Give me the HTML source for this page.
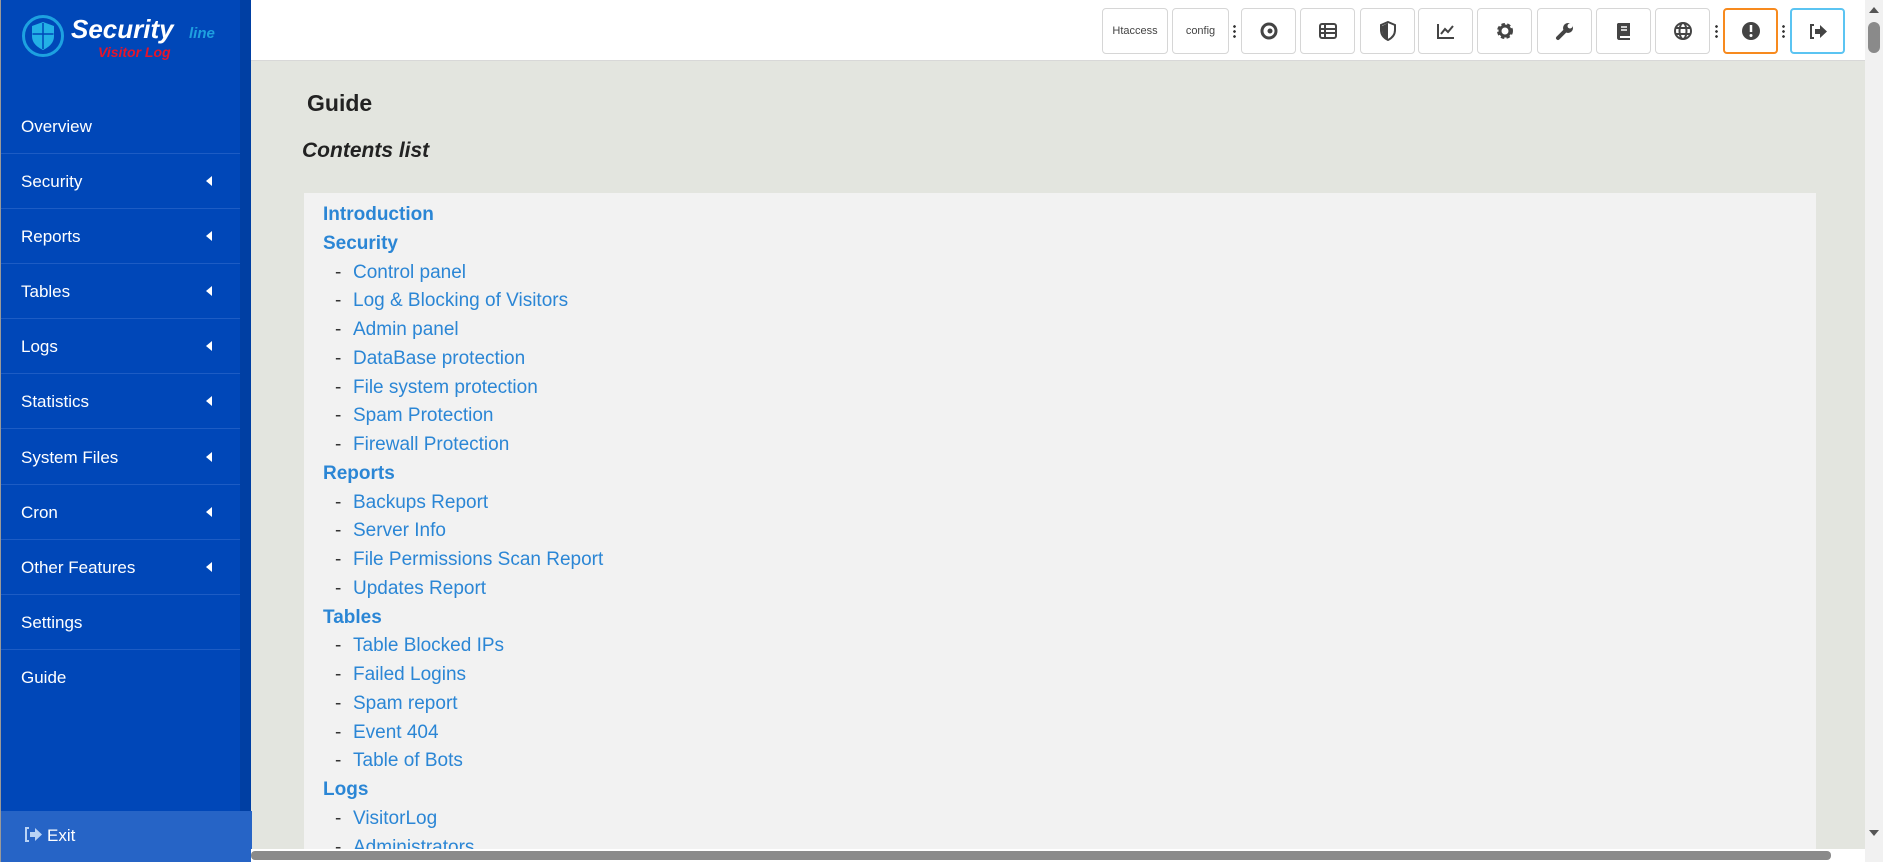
<!DOCTYPE html>
<html><head><meta charset="utf-8">
<style>
*{margin:0;padding:0;box-sizing:border-box}
html,body{width:1883px;height:862px;overflow:hidden;background:#e3e5df;font-family:"Liberation Sans",sans-serif}
.sb{position:absolute;left:0;top:0;width:251px;height:862px;background:#003fa3;border-left:1px solid #999}
.sbin{position:absolute;left:0;top:0;width:239px;height:862px;background:#0047b8}
.item{position:absolute;left:0;width:239px;height:55px;color:#fff;font-size:17px;line-height:55px;padding-left:20px;border-bottom:1px solid #1d5cc4}
.item .ar{position:absolute;left:205px;top:22px;width:0;height:0;border-top:5px solid transparent;border-bottom:5px solid transparent;border-right:6px solid #fff}
.exit{position:absolute;left:0;top:811px;width:251px;height:51px;background:#2664c6;color:#fff;font-size:17px;padding:15px 0 0 22px}
.top{position:absolute;left:251px;top:0;width:1614px;height:61px;background:#fff;border-bottom:1px solid #d8d8d8}
.btn{position:absolute;top:8px;height:46px;width:55px;border:1px solid #d6d6d6;border-radius:4px;background:#fff;display:flex;align-items:center;justify-content:center;font-size:11px;color:#444}
.dots{position:absolute;top:24px;width:3px;height:14px;background:radial-gradient(circle,#333 1.2px,transparent 1.5px) 0 0/3px 5px repeat-y}
.panel{position:absolute;left:304px;top:193px;width:1512px;height:656px;background:#f2f2f2;padding:8px 0 0 19px;overflow:hidden}
.panel div{height:28.75px;line-height:28.75px;font-size:19px;color:#2b86d5}
.panel .h{font-weight:bold}
.panel .s{padding-left:12px}
.panel .s span{color:#333;display:inline-block;width:18px}
</style></head><body>
<div class="sb"><div class="sbin"></div>
<svg style="position:absolute;left:20px;top:14px" width="44" height="44" viewBox="0 0 44 44"><circle cx="22" cy="22" r="19.5" fill="none" stroke="#1da1e0" stroke-width="3"/><path d="M22 8 L33 12 V22 C33 29 28 33 22 36 C16 33 11 29 11 22 V12 Z" fill="#23b0e6"/><path d="M22 9 V35 M11.5 20 H32.5" stroke="#0047b8" stroke-width="1.5"/></svg>
<div style="position:absolute;left:70px;top:14px;color:#fff;font-weight:bold;font-style:italic;font-size:26px">Security</div>
<div style="position:absolute;left:188px;top:25px;color:#1ea0e0;font-weight:bold;font-style:italic;font-size:15px">line</div>
<div style="position:absolute;left:97px;top:44px;color:#e8142a;font-weight:bold;font-style:italic;font-size:14px">Visitor Log</div>
<div class="item" style="top:99px">Overview</div>
<div class="item" style="top:154px">Security<i class="ar"></i></div>
<div class="item" style="top:209px">Reports<i class="ar"></i></div>
<div class="item" style="top:264px">Tables<i class="ar"></i></div>
<div class="item" style="top:319px">Logs<i class="ar"></i></div>
<div class="item" style="top:374px">Statistics<i class="ar"></i></div>
<div class="item" style="top:430px">System Files<i class="ar"></i></div>
<div class="item" style="top:485px">Cron<i class="ar"></i></div>
<div class="item" style="top:540px">Other Features<i class="ar"></i></div>
<div class="item" style="top:595px">Settings</div>
<div class="item" style="top:650px;border-bottom:none">Guide</div>
<div class="exit"><svg width="20" height="17" viewBox="0 0 20 17" style="vertical-align:-2px;margin-right:4px"><path d="M6 2H3V15H6" fill="none" stroke="#b9d3f5" stroke-width="2"/><path d="M7 6H12V2L19 8.5 12 15V11H7Z" fill="#b9d3f5"/></svg>Exit</div>
</div>
<div class="top">
<div class="btn" style="left:851px;width:66px">Htaccess</div>
<div class="btn" style="left:921px;width:57px">config</div>
<div class="dots" style="left:982px"></div>
<div class="btn" style="left:990px"><svg width="20" height="20" viewBox="0 0 20 20"><circle cx="10" cy="10" r="7" fill="none" stroke="#444" stroke-width="3"/><circle cx="11" cy="10" r="2.5" fill="#444"/></svg></div>
<div class="btn" style="left:1049px"><svg width="20" height="18" viewBox="0 0 20 18"><rect x="2" y="2" width="16" height="14" rx="2" fill="none" stroke="#444" stroke-width="2"/><path d="M2 7H18M2 11H18M7 2V16" stroke="#444" stroke-width="2"/></svg></div>
<div class="btn" style="left:1109px"><svg width="18" height="20" viewBox="0 0 18 20"><path d="M9 1L16 4V9C16 14 13 17 9 19 5 17 2 14 2 9V4Z" fill="none" stroke="#444" stroke-width="2"/><path d="M9 2V18C5 16 3 13 3 9V5Z" fill="#444"/></svg></div>
<div class="btn" style="left:1167px"><svg width="20" height="18" viewBox="0 0 20 18"><path d="M2 2V16H18" fill="none" stroke="#444" stroke-width="2"/><path d="M5 12L9 7 12 10 17 4" fill="none" stroke="#444" stroke-width="2"/></svg></div>
<div class="btn" style="left:1226px"><svg width="20" height="20" viewBox="0 0 20 20"><circle cx="10" cy="10" r="6" fill="none" stroke="#444" stroke-width="4" stroke-dasharray="3 2"/><circle cx="10" cy="10" r="5" fill="none" stroke="#444" stroke-width="3"/></svg></div>
<div class="btn" style="left:1286px"><svg width="20" height="20" viewBox="0 0 20 20"><path d="M3 17L11 9" stroke="#444" stroke-width="4" stroke-linecap="round"/><circle cx="13" cy="7" r="5" fill="#444"/><circle cx="15" cy="5" r="2.5" fill="#fff"/></svg></div>
<div class="btn" style="left:1345px"><svg width="16" height="20" viewBox="0 0 16 20"><path d="M2 2H14V15H4V17H14V19H3C2 19 1 18 1 17V3Z" fill="#444"/><path d="M5 6H11M5 9H11" stroke="#fff" stroke-width="1.5"/></svg></div>
<div class="btn" style="left:1404px"><svg width="20" height="20" viewBox="0 0 20 20"><circle cx="10" cy="10" r="8" fill="none" stroke="#444" stroke-width="2"/><ellipse cx="10" cy="10" rx="3.5" ry="8" fill="none" stroke="#444" stroke-width="2"/><path d="M2 7H18M2 13H18" stroke="#444" stroke-width="2"/></svg></div>
<div class="dots" style="left:1464px"></div>
<div class="btn" style="left:1472px;border:2px solid #f78a1e"><svg width="20" height="20" viewBox="0 0 20 20"><circle cx="10" cy="10" r="9" fill="#444"/><path d="M10 4V11" stroke="#fff" stroke-width="2.5"/><circle cx="10" cy="14.5" r="1.5" fill="#fff"/></svg></div>
<div class="dots" style="left:1531px"></div>
<div class="btn" style="left:1539px;border:2px solid #5bc4f2"><svg width="20" height="17" viewBox="0 0 20 17"><path d="M6 2H3V15H6" fill="none" stroke="#444" stroke-width="2"/><path d="M7 6H12V2L19 8.5 12 15V11H7Z" fill="#444"/></svg></div>
</div>
<div style="position:absolute;left:307px;top:90px;font-size:23px;font-weight:bold;color:#222">Guide</div>
<div style="position:absolute;left:302px;top:139px;font-size:21px;font-weight:bold;font-style:italic;color:#222">Contents list</div>
<div class="panel">
<div class="h">Introduction</div>
<div class="h">Security</div>
<div class="s"><span>-</span>Control panel</div>
<div class="s"><span>-</span>Log &amp; Blocking of Visitors</div>
<div class="s"><span>-</span>Admin panel</div>
<div class="s"><span>-</span>DataBase protection</div>
<div class="s"><span>-</span>File system protection</div>
<div class="s"><span>-</span>Spam Protection</div>
<div class="s"><span>-</span>Firewall Protection</div>
<div class="h">Reports</div>
<div class="s"><span>-</span>Backups Report</div>
<div class="s"><span>-</span>Server Info</div>
<div class="s"><span>-</span>File Permissions Scan Report</div>
<div class="s"><span>-</span>Updates Report</div>
<div class="h">Tables</div>
<div class="s"><span>-</span>Table Blocked IPs</div>
<div class="s"><span>-</span>Failed Logins</div>
<div class="s"><span>-</span>Spam report</div>
<div class="s"><span>-</span>Event 404</div>
<div class="s"><span>-</span>Table of Bots</div>
<div class="h">Logs</div>
<div class="s"><span>-</span>VisitorLog</div>
<div class="s"><span>-</span>Administrators</div>
</div>
<div style="position:absolute;left:251px;top:849px;width:1614px;height:13px;background:#fff"></div>
<div style="position:absolute;left:251px;top:851px;width:1580px;height:9px;background:#8a8a8a;border-radius:4px"></div>
<div style="position:absolute;left:1865px;top:0;width:18px;height:862px;background:#f1f1f1"></div>
<div style="position:absolute;left:1868px;top:22px;width:12px;height:31px;background:#8a8a8a;border-radius:6px"></div>
<div style="position:absolute;left:1869px;top:7px;width:0;height:0;border-left:5px solid transparent;border-right:5px solid transparent;border-bottom:6px solid #555"></div>
<div style="position:absolute;left:1869px;top:830px;width:0;height:0;border-left:5px solid transparent;border-right:5px solid transparent;border-top:6px solid #555"></div>
</body></html>
